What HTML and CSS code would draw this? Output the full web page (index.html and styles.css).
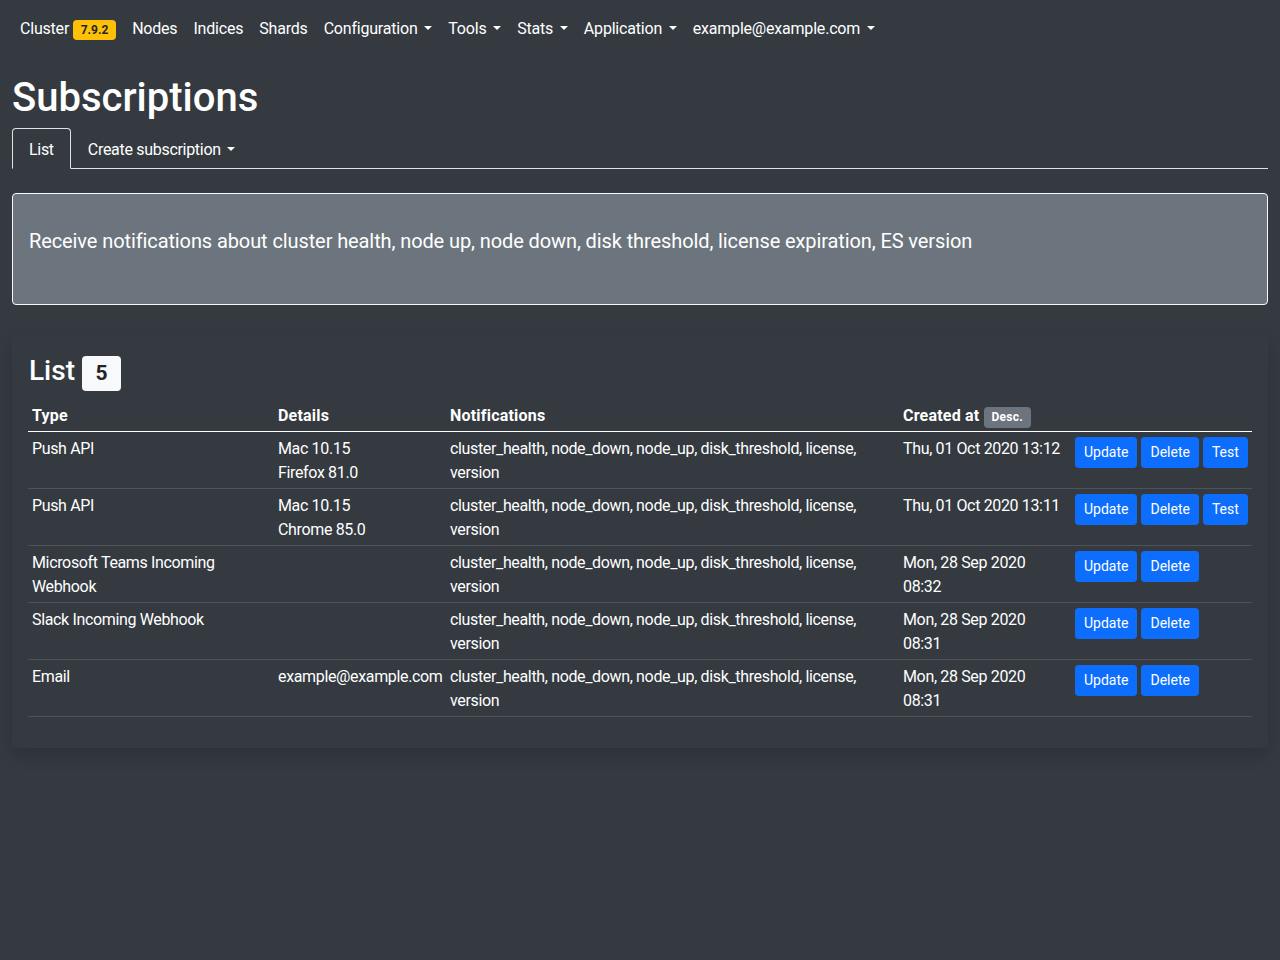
FILE: index.html
```html
<!DOCTYPE html>
<html lang="en">
<head>
<meta charset="utf-8">
<title>Subscriptions</title>
<link rel="stylesheet" href="styles.css">
</head>
<body>
<nav class="navbar">
  <ul class="nav-list">
    <li><a class="nav-link">Cluster <span class="badge badge-warning">7.9.2</span></a></li>
    <li><a class="nav-link">Nodes</a></li>
    <li><a class="nav-link">Indices</a></li>
    <li><a class="nav-link">Shards</a></li>
    <li><a class="nav-link dropdown-toggle">Configuration</a></li>
    <li><a class="nav-link dropdown-toggle">Tools</a></li>
    <li><a class="nav-link dropdown-toggle">Stats</a></li>
    <li><a class="nav-link dropdown-toggle">Application</a></li>
    <li><a class="nav-link dropdown-toggle">example@example.com</a></li>
  </ul>
</nav>
<main class="container">
  <h1 class="title">Subscriptions</h1>
  <ul class="tabs">
    <li><a class="tab active">List</a></li>
    <li><a class="tab dropdown-toggle">Create subscription</a></li>
  </ul>
  <div class="alert">
    <p class="lead">Receive notifications about cluster health, node up, node down, disk threshold, license expiration, ES version</p>
  </div>
  <section class="card">
    <h3 class="card-title">List <span class="badge badge-light">5</span></h3>
    <table class="table">
      <colgroup>
        <col class="c-type"><col class="c-details"><col class="c-notif"><col class="c-created"><col class="c-actions">
      </colgroup>
      <thead>
        <tr><th>Type</th><th>Details</th><th>Notifications</th><th>Created at <span class="badge badge-secondary">Desc.</span></th><th></th></tr>
      </thead>
      <tbody>
        <tr>
          <td>Push API</td>
          <td>Mac 10.15<br>Firefox 81.0</td>
          <td>cluster_health, node_down, node_up, disk_threshold, license, version</td>
          <td class="created">Thu, 01 Oct 2020 13:12</td>
          <td><div class="actions"><button class="btn">Update</button><button class="btn">Delete</button><button class="btn">Test</button></div></td>
        </tr>
        <tr>
          <td>Push API</td>
          <td>Mac 10.15<br>Chrome 85.0</td>
          <td>cluster_health, node_down, node_up, disk_threshold, license, version</td>
          <td class="created">Thu, 01 Oct 2020 13:11</td>
          <td><div class="actions"><button class="btn">Update</button><button class="btn">Delete</button><button class="btn">Test</button></div></td>
        </tr>
        <tr>
          <td>Microsoft Teams Incoming Webhook</td>
          <td></td>
          <td>cluster_health, node_down, node_up, disk_threshold, license, version</td>
          <td class="created">Mon, 28 Sep 2020 08:32</td>
          <td><div class="actions"><button class="btn">Update</button><button class="btn">Delete</button></div></td>
        </tr>
        <tr>
          <td>Slack Incoming Webhook</td>
          <td></td>
          <td>cluster_health, node_down, node_up, disk_threshold, license, version</td>
          <td class="created">Mon, 28 Sep 2020 08:31</td>
          <td><div class="actions"><button class="btn">Update</button><button class="btn">Delete</button></div></td>
        </tr>
        <tr>
          <td>Email</td>
          <td>example@example.com</td>
          <td>cluster_health, node_down, node_up, disk_threshold, license, version</td>
          <td class="created">Mon, 28 Sep 2020 08:31</td>
          <td><div class="actions"><button class="btn">Update</button><button class="btn">Delete</button></div></td>
        </tr>
      </tbody>
    </table>
  </section>
</main>
</body>
</html>
```
FILE: styles.css
```css
* { box-sizing: border-box; }
html, body { margin: 0; padding: 0; }
body {
  background: #343a40;
  color: #fff;
  font-family: Roboto, "Noto Sans", sans-serif;
  font-size: 16px;
  line-height: 1.5;
  min-height: 960px;
}
.navbar {
  padding: 9px 12px 7px;
}
.nav-list {
  display: flex;
  list-style: none;
  margin: 0;
  padding: 0;
}
.nav-link {
  display: block;
  padding: 8px;
  color: #fff;
  line-height: 24px;
  letter-spacing: -0.2px;
}
.dropdown-toggle::after {
  content: "";
  display: inline-block;
  margin-left: 0.42em;
  vertical-align: 0.255em;
  border-top: 0.3em solid;
  border-right: 0.3em solid transparent;
  border-left: 0.3em solid transparent;
}
.badge {
  display: inline-block;
  padding: 0.35em 0.65em;
  font-size: 0.75em;
  font-weight: 700;
  line-height: 1;
  text-align: center;
  white-space: nowrap;
  vertical-align: baseline;
  border-radius: 0.25rem;
  letter-spacing: 0;
}
.badge-warning { background: #ffc107; color: #212529; }
.badge-light { background: #f8f9fa; color: #212529; }
.badge-secondary { background: #6c757d; color: #fff; letter-spacing: 0.3px; }
.container {
  padding: 16px 12px 0;
}
.title {
  margin: 2px 0 6px;
  font-size: 40px;
  font-weight: 500;
  line-height: 48px;
}
.tabs {
  display: flex;
  list-style: none;
  margin: 0;
  padding: 0;
  border-bottom: 1px solid #dee2e6;
}
.tab {
  display: block;
  padding: 9px 16px 6px;
  line-height: 24px;
  margin-bottom: -1px;
  border: 1px solid transparent;
  border-top-left-radius: 0.25rem;
  border-top-right-radius: 0.25rem;
  color: #fff;
  letter-spacing: -0.3px;
}
.tab.active {
  background: #343a40;
  border-color: #dee2e6 #dee2e6 #343a40;
}
.alert {
  margin-top: 24px;
  background: #6c757d;
  border: 1px solid #f8f9fa;
  border-radius: 0.25rem;
  padding: 16px;
}
.lead {
  margin: 16px 0 32px;
  font-size: 20px;
  font-weight: 400;
  line-height: 30px;
  letter-spacing: -0.1px;
}
.card {
  margin-top: 30px;
  background: #343a40;
  border-radius: 0.25rem;
  box-shadow: 0 0.5rem 1rem rgba(0, 0, 0, 0.15);
  padding: 17px 16px 16px;
}
.card-title {
  margin: 0 0 8px;
  font-size: 28px;
  font-weight: 500;
  line-height: 38px;
  padding-left: 1px;
}
.table {
  width: 100%;
  border-collapse: collapse;
  table-layout: fixed;
  margin-bottom: 15px;
}
.c-type { width: 246px; }
.c-details { width: 172px; }
.c-notif { width: 453px; }
.c-created { width: 172px; }
.c-actions { width: 181px; }
.table th, .table td {
  padding: 5px 4px 3px;
  text-align: left;
  vertical-align: top;
  line-height: 24px;
}
.table th {
  font-weight: 700;
  letter-spacing: 0.2px;
  border-bottom: 1px solid #fff;
}
.table td {
  letter-spacing: -0.35px;
  border-bottom: 1px solid #4d5359;
}
.table td.created {
  padding-right: 8px;
}
.actions {
  display: flex;
  gap: 4px;
}
.btn {
  font-family: inherit;
  font-size: 14px;
  line-height: 21px;
  padding: 4px 8px;
  border: 1px solid #0d6efd;
  background: #0d6efd;
  color: #fff;
  border-radius: 0.2rem;
  letter-spacing: 0;
}
```
